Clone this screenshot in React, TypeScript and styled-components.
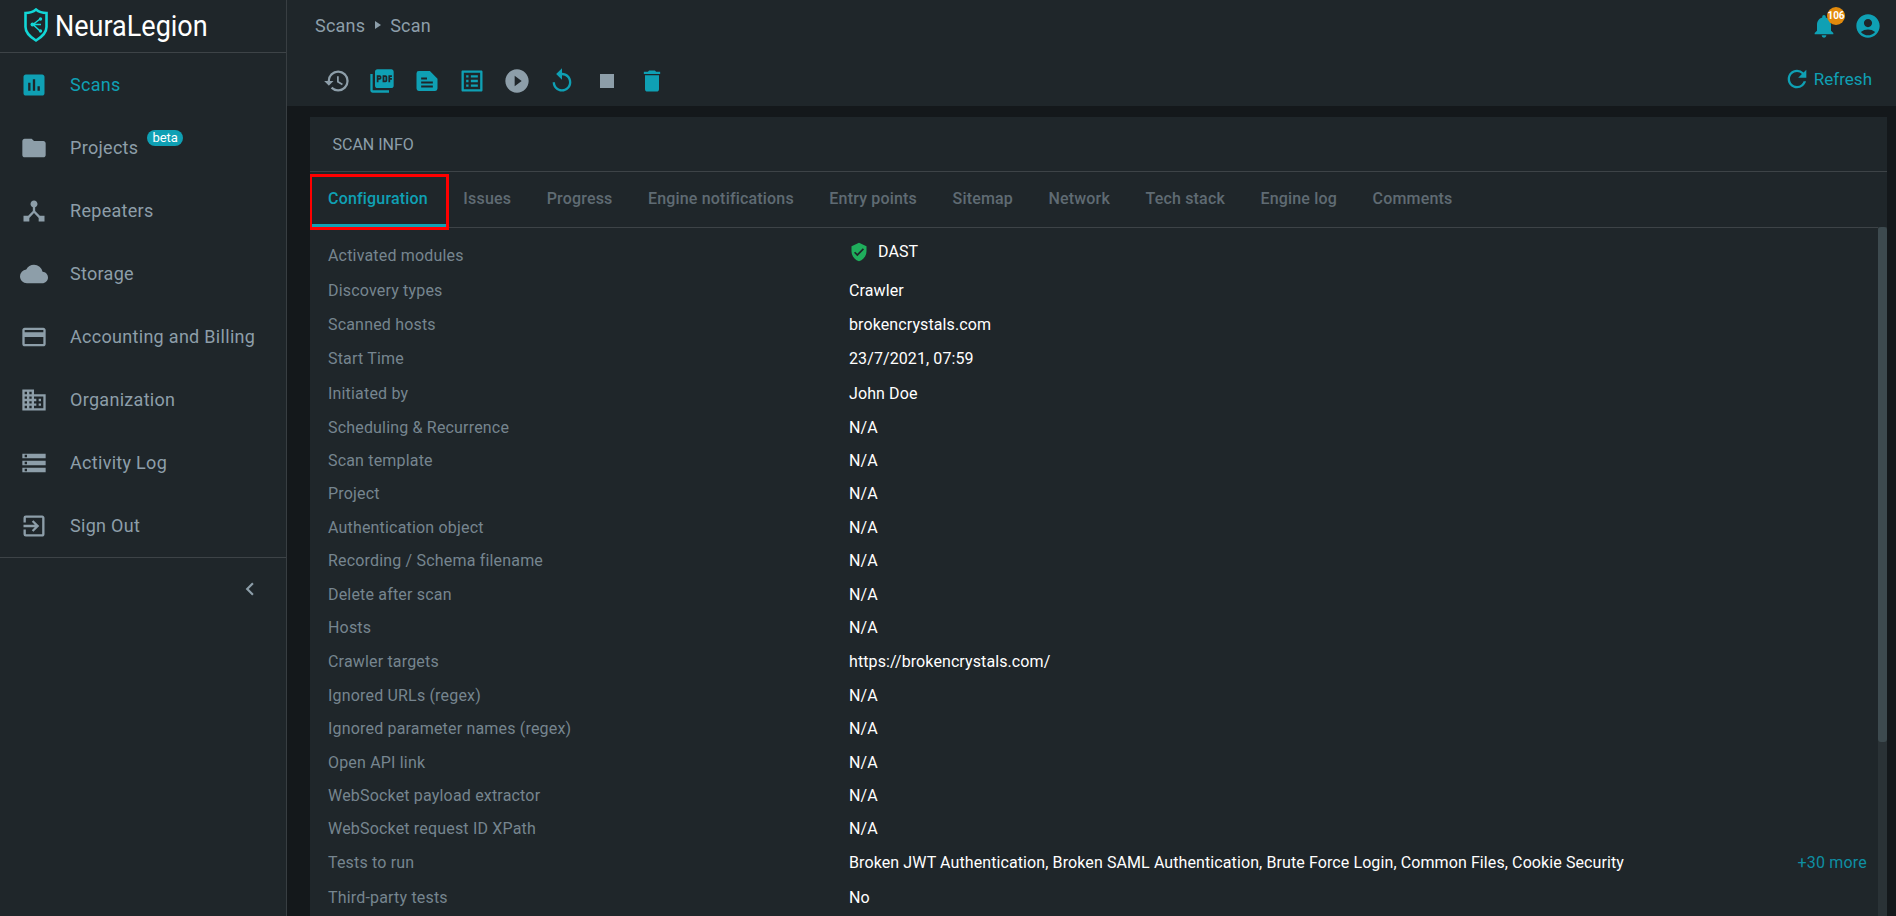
import React from 'react'
import styled, { createGlobalStyle } from 'styled-components'
import {
  MdAccountCircle,
  MdAssessment,
  MdChevronLeft,
  MdCloud,
  MdCreditCard,
  MdDelete,
  MdDeviceHub,
  MdDomain,
  MdExitToApp,
  MdFolder,
  MdHistory,
  MdListAlt,
  MdNotifications,
  MdPictureAsPdf,
  MdPlayCircleFilled,
  MdRefresh,
  MdReplay,
  MdStop,
  MdStorage,
  MdVerifiedUser,
} from 'react-icons/md'

const ACCENT = '#0fa0b4'
const MUTED = '#8d9ea9'

const GlobalStyle = createGlobalStyle`
  html, body {
    margin: 0;
    height: 100%;
    overflow: hidden;
    background: #14181b;
  }
  body {
    font-family: 'Roboto', 'Liberation Sans', sans-serif;
  }
`

const Page = styled.div`
  width: 1896px;
  height: 916px;
  display: flex;
  overflow: hidden;
  background: #14181b;
`
const Sidebar = styled.aside`
  width: 286px;
  flex: none;
  background: #1f262a;
  border-right: 1px solid #383e42;
`
const Brand = styled.div`
  height: 50px;
  display: flex;
  align-items: center;
  gap: 7px;
  padding: 0 0 2px 24px;
  border-bottom: 1px solid #3d4347;
  color: #fff;
`
const BrandName = styled.span`
  display: inline-block;
  font-size: 30px;
  transform: scaleX(0.9);
  transform-origin: left center;
`
const Nav = styled.nav`
  border-bottom: 1px solid #3d4347;
`
const NavItem = styled.div<{ $active?: boolean }>`
  height: 63px;
  display: flex;
  align-items: center;
  padding-left: 20px;
  font-size: 18px;
  letter-spacing: 0.3px;
  color: ${(p) => (p.$active ? ACCENT : MUTED)};
  svg {
    font-size: 28px;
    flex: none;
    margin-right: 22px;
  }
`
const Beta = styled.span`
  position: relative;
  top: -10px;
  margin-left: 9px;
  padding: 0 5px;
  height: 16px;
  line-height: 15px;
  border-radius: 8px;
  background: ${ACCENT};
  color: #fff;
  font-size: 13px;
  letter-spacing: 0;
`
const Collapse = styled.div`
  display: flex;
  justify-content: flex-end;
  padding: 18px 23px 0 0;
  color: ${MUTED};
  font-size: 26px;
`
const Main = styled.main`
  flex: 1;
  min-width: 0;
`
const Topbar = styled.header`
  height: 106px;
  background: #1f262a;
  padding: 0 14px 0 28px;
`
const TopRow = styled.div`
  height: 52px;
  display: flex;
  align-items: center;
  justify-content: space-between;
`
const Crumbs = styled.div`
  display: flex;
  align-items: center;
  gap: 9px;
  padding-bottom: 2px;
  color: ${MUTED};
  font-size: 18px;
  letter-spacing: 0.2px;
`
const CrumbArrow = styled.span`
  width: 0;
  height: 0;
  margin-left: 1px;
  border-left: 6px solid ${MUTED};
  border-top: 4px solid transparent;
  border-bottom: 4px solid transparent;
`
const TopIcons = styled.div`
  display: flex;
  align-items: center;
  gap: 16px;
  color: ${ACCENT};
  font-size: 28px;
`
const Bell = styled.div`
  position: relative;
  display: flex;
`
const BellCount = styled.span`
  position: absolute;
  top: -5px;
  left: 17px;
  width: 18px;
  height: 18px;
  border-radius: 50%;
  background: #e28a0c;
  color: #fff;
  font-size: 10px;
  font-weight: 700;
  line-height: 18px;
  text-align: center;
`
const ToolRow = styled.div`
  display: flex;
  align-items: center;
  justify-content: space-between;
  padding-top: 13px;
`
const Tools = styled.div`
  display: flex;
  align-items: center;
  gap: 17px;
  padding-left: 8px;
`
const Tool = styled.span<{ $grey?: boolean }>`
  display: flex;
  font-size: 28px;
  color: ${(p) => (p.$grey ? MUTED : ACCENT)};
`
const Refresh = styled.div`
  display: flex;
  align-items: center;
  gap: 3px;
  margin-right: 10px;
  padding-bottom: 4px;
  color: ${ACCENT};
  font-size: 17px;
  svg {
    font-size: 28px;
  }
`
const Card = styled.section`
  position: relative;
  margin: 11px 0 0 23px;
  width: 1577px;
  height: 799px;
  background: #1f262a;
  overflow: hidden;
`
const CardTitle = styled.div`
  height: 54px;
  display: flex;
  align-items: center;
  padding-left: 22.5px;
  color: ${MUTED};
  font-size: 16px;
  border-bottom: 1px solid #3d4347;
`
const Tabs = styled.div`
  height: 55px;
  display: flex;
  gap: 35.5px;
  padding-left: 18px;
  border-bottom: 1px solid #3d4347;
`
const Tab = styled.div<{ $active?: boolean }>`
  position: relative;
  display: flex;
  align-items: center;
  padding-bottom: 2px;
  font-size: 16px;
  font-weight: 500;
  letter-spacing: 0.18px;
  color: ${(p) => (p.$active ? ACCENT : '#5f6b73')};
`
const Underline = styled.span`
  position: absolute;
  left: -17px;
  right: -18px;
  bottom: 0;
  height: 3px;
  background: ${ACCENT};
`
const Marker = styled.span`
  position: absolute;
  left: -19px;
  top: 2px;
  right: -21px;
  height: 50px;
  border: 3px solid #ff0000;
`
const Scrollbar = styled.div`
  position: absolute;
  right: 0;
  top: 110px;
  bottom: 0;
  width: 9px;
  background: #2a3236;
`
const Thumb = styled.div`
  height: 515px;
  border-radius: 3px;
  background: #3d4a4f;
`
const Rows = styled.div`
  padding: 10.5px 0 0 18px;
`
const Row = styled.div<{ $tall?: boolean }>`
  height: ${(p) => (p.$tall ? '34.4px' : '33.4px')};
  display: grid;
  grid-template-columns: 521px 1fr auto;
  align-items: center;
  padding-right: 20px;
`
const Label = styled.div`
  color: #76858f;
  font-size: 16px;
  letter-spacing: 0.18px;
`
const Value = styled.div`
  display: flex;
  align-items: center;
  gap: 9px;
  color: #fff;
  font-size: 16px;
  letter-spacing: 0.1px;
`
const ModuleValue = styled(Value)`
  position: relative;
  top: -4px;
`
const DastIcon = styled(MdVerifiedUser)`
  color: #1fae5c;
  font-size: 20px;
`
const More = styled.div`
  color: #0e8fa3;
  font-size: 16px;
  letter-spacing: 0.2px;
`

const DocIcon = () => (
  <svg width="1em" height="1em" viewBox="0 0 24 24" fill="currentColor">
    <path
      fillRule="evenodd"
      d="M5 3.5h9.5l6.5 6.5v8.5a2 2 0 0 1-2 2H5a2 2 0 0 1-2-2v-13a2 2 0 0 1 2-2zM7 9v1.7h5V9H7zm0 3.4v1.7h10v-1.7H7zm0 3.4v1.7h10v-1.7H7z"
    />
  </svg>
)

const navItems = [
  { label: 'Scans', Icon: MdAssessment, active: true },
  { label: 'Projects', Icon: MdFolder, beta: true },
  { label: 'Repeaters', Icon: MdDeviceHub },
  { label: 'Storage', Icon: MdCloud },
  { label: 'Accounting and Billing', Icon: MdCreditCard },
  { label: 'Organization', Icon: MdDomain },
  { label: 'Activity Log', Icon: MdStorage },
  { label: 'Sign Out', Icon: MdExitToApp },
]

const tools = [
  { Icon: MdHistory, grey: true },
  { Icon: MdPictureAsPdf },
  { Icon: DocIcon },
  { Icon: MdListAlt },
  { Icon: MdPlayCircleFilled, grey: true },
  { Icon: MdReplay },
  { Icon: MdStop, grey: true },
  { Icon: MdDelete },
]

const tabs = [
  'Configuration',
  'Issues',
  'Progress',
  'Engine notifications',
  'Entry points',
  'Sitemap',
  'Network',
  'Tech stack',
  'Engine log',
  'Comments',
]

const rows: [string, string][] = [
  ['Discovery types', 'Crawler'],
  ['Scanned hosts', 'brokencrystals.com'],
  ['Start Time', '23/7/2021, 07:59'],
  ['Initiated by', 'John Doe'],
  ['Scheduling & Recurrence', 'N/A'],
  ['Scan template', 'N/A'],
  ['Project', 'N/A'],
  ['Authentication object', 'N/A'],
  ['Recording / Schema filename', 'N/A'],
  ['Delete after scan', 'N/A'],
  ['Hosts', 'N/A'],
  ['Crawler targets', 'https://brokencrystals.com/'],
  ['Ignored URLs (regex)', 'N/A'],
  ['Ignored parameter names (regex)', 'N/A'],
  ['Open API link', 'N/A'],
  ['WebSocket payload extractor', 'N/A'],
  ['WebSocket request ID XPath', 'N/A'],
]

const Logo = () => (
  <svg width="24" height="34" viewBox="0 0 24 34" fill="none">
    <path
      d="M12 1.5 C9 4 5 5 1.5 5 V19 C1.5 25 7 29.5 12 32.5 C17 29.5 22.5 25 22.5 19 V5 C19 5 15 4 12 1.5 Z"
      stroke="#12d6d6"
      strokeWidth="2.6"
    />
    <path
      d="M16 11 L9 16.5 L16 23 M9 16.5 H17"
      stroke="#12d6d6"
      strokeWidth="1.5"
    />
    <circle cx="8.5" cy="16.5" r="2" fill="#12d6d6" />
    <circle cx="16.5" cy="11" r="1.7" fill="#12d6d6" />
    <circle cx="16.5" cy="23" r="1.7" fill="#12d6d6" />
  </svg>
)

export default function App() {
  return (
    <Page>
      <GlobalStyle />
      <Sidebar>
        <Brand>
          <Logo />
          <BrandName>NeuraLegion</BrandName>
        </Brand>
        <Nav>
          {navItems.map(({ label, Icon, active, beta }) => (
            <NavItem key={label} $active={active}>
              <Icon />
              {label}
              {beta ? <Beta>beta</Beta> : null}
            </NavItem>
          ))}
        </Nav>
        <Collapse>
          <MdChevronLeft />
        </Collapse>
      </Sidebar>
      <Main>
        <Topbar>
          <TopRow>
            <Crumbs>
              Scans <CrumbArrow /> Scan
            </Crumbs>
            <TopIcons>
              <Bell>
                <MdNotifications />
                <BellCount>106</BellCount>
              </Bell>
              <MdAccountCircle />
            </TopIcons>
          </TopRow>
          <ToolRow>
            <Tools>
              {tools.map(({ Icon, grey }, i) => (
                <Tool key={i} $grey={grey}>
                  <Icon />
                </Tool>
              ))}
            </Tools>
            <Refresh>
              <MdRefresh />
              Refresh
            </Refresh>
          </ToolRow>
        </Topbar>
        <Card>
          <CardTitle>SCAN INFO</CardTitle>
          <Tabs>
            {tabs.map((tab, i) => (
              <Tab key={tab} $active={i === 0}>
                {tab}
                {i === 0 ? (
                  <>
                    <Underline />
                    <Marker />
                  </>
                ) : null}
              </Tab>
            ))}
          </Tabs>
          <Scrollbar>
            <Thumb />
          </Scrollbar>
          <Rows>
            <Row $tall>
              <Label>Activated modules</Label>
              <ModuleValue>
                <DastIcon />
                DAST
              </ModuleValue>
            </Row>
            {rows.map(([label, value]) => (
              <Row key={label} $tall={value !== 'N/A'}>
                <Label>{label}</Label>
                <Value>{value}</Value>
              </Row>
            ))}
            <Row $tall>
              <Label>Tests to run</Label>
              <Value>
                Broken JWT Authentication, Broken SAML Authentication, Brute
                Force Login, Common Files, Cookie Security
              </Value>
              <More>+30 more</More>
            </Row>
            <Row $tall>
              <Label>Third-party tests</Label>
              <Value>No</Value>
            </Row>
          </Rows>
        </Card>
      </Main>
    </Page>
  )
}
